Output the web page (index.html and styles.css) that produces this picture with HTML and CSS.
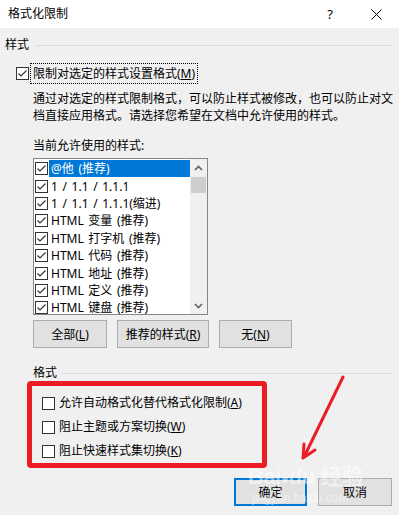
FILE: index.html
```html
<!DOCTYPE html>
<html lang="zh-CN">
<head>
    <meta charset="UTF-8">
    <meta name="viewport" content="width=device-width, initial-scale=1.0">
    <title>格式化限制</title>
    <link rel="stylesheet" href="styles.css">
</head>
<body>
    <div class="dialog">
        <div class="titlebar">
            <span class="title">格式化限制</span>
            <span class="help">?</span>
            <span class="close">
                <svg width="11" height="11" viewBox="0 0 11 11"><path d="M0.5 0.5 L10.5 10.5 M10.5 0.5 L0.5 10.5" stroke="#000" stroke-width="1" fill="none"/></svg>
            </span>
        </div>

        <div class="content">
            <div class="group-head">
                <span>样式</span>
                <span class="rule"></span>
            </div>

            <div class="main-check">
                <span class="box checked"></span>
                <span class="focus-label">限制对选定的样式设置格式(<u>M</u>)</span>
            </div>

            <p class="desc">通过对选定的样式限制格式，可以防止样式被修改，也可以防止对文<br>档直接应用格式。请选择您希望在文档中允许使用的样式。</p>

            <div class="list-label">当前允许使用的样式:</div>

            <div class="listbox">
                <div class="items">
                    <div class="item sel"><span class="box checked"></span><span class="name">@他 (推荐)</span></div>
                    <div class="item"><span class="box checked"></span><span class="name">1 / 1.1 / 1.1.1</span></div>
                    <div class="item"><span class="box checked"></span><span class="name">1 / 1.1 / 1.1.1(缩进)</span></div>
                    <div class="item"><span class="box checked"></span><span class="name">HTML 变量 (推荐)</span></div>
                    <div class="item"><span class="box checked"></span><span class="name">HTML 打字机 (推荐)</span></div>
                    <div class="item"><span class="box checked"></span><span class="name">HTML 代码 (推荐)</span></div>
                    <div class="item"><span class="box checked"></span><span class="name">HTML 地址 (推荐)</span></div>
                    <div class="item"><span class="box checked"></span><span class="name">HTML 定义 (推荐)</span></div>
                    <div class="item"><span class="box checked"></span><span class="name">HTML 键盘 (推荐)</span></div>
                </div>
                <div class="scrollbar">
                    <div class="arrow">
                        <svg width="9" height="6" viewBox="0 0 9 6"><path d="M1 5 L4.5 1.5 L8 5" stroke="#606060" stroke-width="1.6" fill="none"/></svg>
                    </div>
                    <div class="thumb"></div>
                    <div class="track"></div>
                    <div class="arrow">
                        <svg width="9" height="6" viewBox="0 0 9 6"><path d="M1 1 L4.5 4.5 L8 1" stroke="#606060" stroke-width="1.6" fill="none"/></svg>
                    </div>
                </div>
            </div>

            <div class="list-buttons">
                <button class="btn w74">全部(<u>L</u>)</button>
                <button class="btn w92">推荐的样式(<u>R</u>)</button>
                <button class="btn w73">无(<u>N</u>)</button>
            </div>

            <div class="group-head sub">
                <span>格式</span>
                <span class="rule"></span>
            </div>

            <div class="marked">
                <div class="option"><span class="box"></span><span>允许自动格式化替代格式化限制(<u>A</u>)</span></div>
                <div class="option"><span class="box"></span><span>阻止主题或方案切换(<u>W</u>)</span></div>
                <div class="option"><span class="box"></span><span>阻止快速样式集切换(<u>K</u>)</span></div>
            </div>

            <div class="footer">
                <button class="btn w73 default">确定</button>
                <button class="btn w74">取消</button>
            </div>
        </div>

        <div class="watermark">
            <span class="wm-logo">Bai<span class="paw">●</span>du 经验</span>
            <span class="wm-url">jingyan.baidu.com</span>
        </div>

        <svg class="annot" width="399" height="515" viewBox="0 0 399 515">
            <path d="M343 377 L305 455" stroke="#ec1c24" stroke-width="3" stroke-linecap="round" fill="none"/>
            <path d="M304 444 L303 458 L315 450" stroke="#ec1c24" stroke-width="3" stroke-linecap="round" stroke-linejoin="round" fill="none"/>
        </svg>
    </div>
</body>
</html>
```

FILE: styles.css
```css
body {
    margin: 0;
    padding: 0;
    font-family: "Noto Sans", "Noto Sans CJK SC", sans-serif;
    font-size: 12px;
    color: #000;
    background: #f0f0f0;
}

.dialog {
    position: relative;
    width: 399px;
    height: 515px;
    overflow: hidden;
    background: #f0f0f0;
}

.titlebar {
    height: 28px;
    background: #fff;
    display: flex;
    align-items: center;
}

.title {
    flex: 1;
    padding-left: 8px;
    line-height: 16px;
}

.help {
    width: 20px;
    text-align: center;
    font-size: 13px;
    margin-right: 13px;
}

.close {
    width: 46px;
    height: 28px;
    display: flex;
    align-items: center;
    justify-content: center;
}

.content {
    padding: 9px 7px 0 5px;
}

.group-head {
    display: flex;
    align-items: center;
    gap: 6px;
    line-height: 16px;
}

.group-head .rule {
    flex: 1;
    height: 1px;
    background: #dcdcdc;
}

.group-head.sub {
    margin: 17px 0 0 28px;
    gap: 5px;
}

.box {
    display: inline-block;
    width: 13px;
    height: 13px;
    box-sizing: border-box;
    border: 1px solid #333;
    background: #fff;
    flex-shrink: 0;
}

.box.checked {
    background: #fff url("data:image/svg+xml,%3Csvg xmlns='http://www.w3.org/2000/svg' width='11' height='11' viewBox='0 0 11 11'%3E%3Cpath d='M1.5 5.5 L4 8 L9.5 2.5' stroke='%23333' stroke-width='1.2' fill='none'/%3E%3C/svg%3E") no-repeat center;
}

.main-check {
    display: flex;
    align-items: center;
    margin: 10px 0 0 11px;
}

.focus-label {
    margin-left: 1px;
    border: 1px dotted #000;
    padding: 1px 2px 1px 2px;
    line-height: 17px;
}

.desc {
    margin: 6px 0 0 28px;
    line-height: 17px;
    white-space: nowrap;
}

.list-label {
    margin: 14px 0 0 28px;
    line-height: 16px;
}

.listbox {
    margin: 4px 0 0 28px;
    width: 175px;
    height: 157px;
    box-sizing: border-box;
    border: 1px solid #828790;
    background: #fff;
    display: flex;
    overflow: hidden;
}

.items {
    flex: 1;
    padding-top: 1px;
    overflow: hidden;
}

.item {
    display: flex;
    align-items: center;
    height: 17.4px;
    padding-left: 1px;
}

.item .name {
    flex: 1;
    margin-left: 1px;
    padding-left: 2px;
    line-height: 17px;
    word-spacing: 1.5px;
    white-space: nowrap;
}

.item.sel .name {
    background: #0078d7;
    color: #fff;
}

.scrollbar {
    width: 17px;
    background: #f0f0f0;
    display: flex;
    flex-direction: column;
}

.scrollbar .arrow {
    height: 17px;
    display: flex;
    align-items: center;
    justify-content: center;
}

.scrollbar .thumb {
    height: 16px;
    margin: 1px 1px 0 1px;
    background: #cdcdcd;
}

.scrollbar .track {
    flex: 1;
}

.list-buttons {
    display: flex;
    gap: 10px;
    margin: 5px 0 0 28px;
}

.btn {
    height: 28px;
    padding: 0;
    box-sizing: border-box;
    border: 1px solid #adadad;
    background: #e1e1e1;
    font-family: inherit;
    font-size: 12px;
    color: #000;
}

.btn.default {
    border: 2px solid #0078d7;
}

.w73 { width: 73px; }
.w74 { width: 74px; }
.w92 { width: 92px; }

.marked {
    margin-left: 22px;
    width: 240px;
    height: 87px;
    box-sizing: border-box;
    border: 5px solid #ec1c24;
    border-radius: 4px;
    padding: 5px 0 0 10px;
}

.option {
    display: flex;
    align-items: center;
    gap: 4px;
    height: 24px;
    line-height: 16px;
}

.footer {
    display: flex;
    justify-content: flex-end;
    gap: 11px;
    margin-top: 10px;
}

.watermark {
    position: absolute;
    left: 248px;
    top: 464px;
    display: flex;
    flex-direction: column;
    color: rgba(255, 255, 255, 0.5);
    pointer-events: none;
}

.wm-logo {
    font-family: "Liberation Sans", "Noto Sans CJK SC", sans-serif;
    font-size: 22px;
    font-weight: bold;
    line-height: 26px;
    letter-spacing: -0.5px;
}

.wm-logo .paw {
    font-size: 14px;
}

.wm-url {
    font-family: "Liberation Sans", sans-serif;
    font-size: 12px;
    line-height: 13px;
    padding-left: 4px;
}

.annot {
    position: absolute;
    left: 0;
    top: 0;
    pointer-events: none;
}
```
